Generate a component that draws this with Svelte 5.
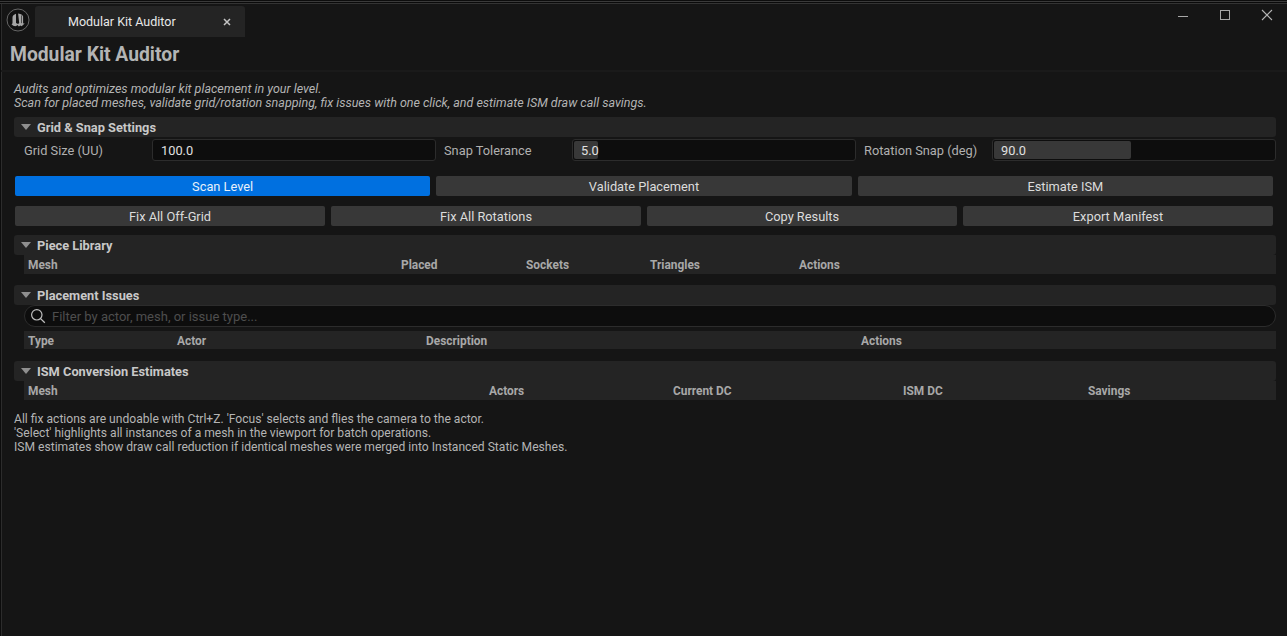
<script lang="ts">
  const grid = [
    { label: 'Grid Size (UU)', value: '100.0', fill: 0 },
    { label: 'Snap Tolerance', value: '5.0', fill: 8.5 },
    { label: 'Rotation Snap (deg)', value: '90.0', fill: 48.6 }
  ]
  const topButtons = ['Validate Placement', 'Estimate ISM']
  const bottomButtons = ['Fix All Off-Grid', 'Fix All Rotations', 'Copy Results', 'Export Manifest']
</script>

<div class="window">
  <header class="titlebar">
    <svg class="logo" viewBox="0 0 24 24" width="24" height="24" aria-hidden="true">
      <circle cx="12" cy="12" r="11" fill="#101010" stroke="#666" stroke-width="1" />
      <path
        d="M10 5.8C7.8 6.6 6.5 7.8 6.5 9.5v5.6c0 .6-.4 1-1 1.2 1.3 1.4 3.1 2.2 4.7 1.8l1.2-1.1 1.5 1.5 1.5-1 1.1.7c1.4-.7 2.5-1.9 3-3.2-.5.4-1 .5-1.4.4V8.6c0-1.3-1.6-2.6-5-3.2L13.2 15 12 16l-2-1z"
        fill="#a4a4a4"
      />
      <path d="M15.5 7.4v7.8" stroke="#101010" stroke-width="0.6" />
    </svg>
    <div class="tab">
      <span class="tab-label">Modular Kit Auditor</span>
      <svg class="tab-close" viewBox="0 0 8 8" width="8" height="8" aria-hidden="true">
        <path d="M1 1l6 6M7 1L1 7" stroke="#c4c4c4" stroke-width="1.5" />
      </svg>
    </div>
    <div class="winctl">
      <svg viewBox="0 0 12 12" width="12" height="12" aria-hidden="true"><path d="M1 7.5h10" stroke="#a8a8a8" /></svg>
      <svg viewBox="0 0 12 12" width="12" height="12" aria-hidden="true"><rect x="1.5" y="1.5" width="9" height="9" fill="none" stroke="#a8a8a8" /></svg>
      <svg viewBox="0 0 12 12" width="12" height="12" aria-hidden="true"><path d="M1 1l10 10M11 1L1 11" stroke="#b4b4b4" stroke-width="1.1" /></svg>
    </div>
  </header>

  <h1 class="heading">Modular Kit Auditor</h1>

  <main class="content">
    <p class="intro">
      Audits and optimizes modular kit placement in your level.<br />
      Scan for placed meshes, validate grid/rotation snapping, fix issues with one click, and estimate ISM draw call savings.
    </p>

    <div class="section-head"><span class="arrow"></span>Grid &amp; Snap Settings</div>
    <div class="settings">
      {#each grid as g}
        <div class="field">
          <span class="field-label">{g.label}</span>
          <div class="input">
            {#if g.fill}<span class="input-fill" style="width: {g.fill}%"></span>{/if}
            <span class="input-value">{g.value}</span>
          </div>
        </div>
      {/each}
    </div>

    <div class="btn-row three">
      <button class="btn primary">Scan Level</button>
      {#each topButtons as b}
        <button class="btn">{b}</button>
      {/each}
    </div>
    <div class="btn-row four">
      {#each bottomButtons as b}
        <button class="btn">{b}</button>
      {/each}
    </div>

    <div class="section-head first"><span class="arrow"></span>Piece Library</div>
    <div class="table-head pieces">
      <span>Mesh</span><span>Placed</span><span>Sockets</span><span>Triangles</span><span>Actions</span>
    </div>

    <div class="section-head tight"><span class="arrow"></span>Placement Issues</div>
    <div class="search">
      <svg viewBox="0 0 16 16" width="16" height="16" aria-hidden="true">
        <circle cx="6.8" cy="6.8" r="5.2" fill="none" stroke="#c0c0c0" stroke-width="1.2" />
        <path d="M10.6 10.6l4.2 4.2" stroke="#c0c0c0" stroke-width="1.3" />
      </svg>
      <span>Filter by actor, mesh, or issue type...</span>
    </div>
    <div class="table-head issues">
      <span>Type</span><span>Actor</span><span>Description</span><span>Actions</span>
    </div>

    <div class="section-head"><span class="arrow"></span>ISM Conversion Estimates</div>
    <div class="table-head ism">
      <span>Mesh</span><span>Actors</span><span>Current DC</span><span>ISM DC</span><span>Savings</span>
    </div>

    <p class="notes">
      All fix actions are undoable with Ctrl+Z. 'Focus' selects and flies the camera to the actor.<br />
      'Select' highlights all instances of a mesh in the viewport for batch operations.<br />
      ISM estimates show draw call reduction if identical meshes were merged into Instanced Static Meshes.
    </p>
  </main>
</div>

<style>
  :global(body) {
    margin: 0;
    background: #151515;
  }
  .window {
    height: 636px;
    box-sizing: border-box;
    padding-left: 1px;
    background:
      linear-gradient(to bottom, #0c0c0c 1px, #3a3a3a 1px, #3a3a3a 2px, #0a0a0a 2px, #0a0a0a 3px, #333 3px, #333 4px, transparent 4px),
      linear-gradient(to right, #0c0c0c 1px, #2c2c2c 1px, #2c2c2c 2px, #151515 2px);
    overflow: hidden;
    font-family: Roboto, "Liberation Sans", sans-serif;
    font-size: 12px;
    color: #c0c0c0;
  }
  .titlebar {
    height: 37px;
    display: flex;
    align-items: flex-start;
    box-sizing: border-box;
    padding: 6px 0 0 5px;
  }
  .logo {
    flex-shrink: 0;
    margin-top: 2px;
  }
  .tab {
    width: 210px;
    height: 31px;
    margin-left: 5px;
    background: #242424;
    border-radius: 3px 3px 0 0;
    display: flex;
    align-items: center;
    box-sizing: border-box;
    padding: 0 14px 0 33px;
    color: #e8e8e8;
    font-size: 12.5px;
  }
  .tab-label {
    flex: 1;
  }
  .winctl {
    margin-left: auto;
    display: flex;
    gap: 30px;
    padding: 3px 14px 0 0;
  }
  .heading {
    margin: 0;
    height: 33px;
    padding: 0 0 0 9px;
    line-height: 36px;
    font-size: 19.3px;
    font-weight: 700;
    color: #b4b4b4;
    border-bottom: 2px solid #1a1a1a;
    box-sizing: content-box;
  }
  .content {
    padding: 10px 11px 0 13px;
  }
  .intro {
    margin: 0 0 7px;
    font-style: italic;
    font-size: 12.5px;
    line-height: 14px;
    color: #b4b4b4;
  }
  .section-head {
    height: 20px;
    margin-top: 12px;
    background: #242424;
    border-radius: 3px;
    display: flex;
    align-items: center;
    font-weight: 700;
    font-size: 12.8px;
    color: #c8c8c8;
    padding-left: 7px;
  }
  .intro + .section-head {
    margin-top: 0;
  }
  .section-head.first {
    margin-top: 9px;
  }
  .section-head.tight {
    margin-top: 11px;
  }
  .arrow {
    width: 0;
    height: 0;
    border-left: 5px solid transparent;
    border-right: 5px solid transparent;
    border-top: 6px solid #8f8f8f;
    margin-right: 6px;
  }
  .settings {
    display: grid;
    grid-template-columns: repeat(3, 1fr);
    column-gap: 8px;
    margin-top: 2px;
    padding-left: 10px;
  }
  .field {
    display: grid;
    grid-template-columns: 128px 1fr;
    align-items: center;
  }
  .field-label {
    color: #b0b0b0;
    font-size: 12.8px;
  }
  .input {
    position: relative;
    height: 22px;
    box-sizing: border-box;
    background: #0d0d0d;
    border: 1px solid #2c2c2c;
    border-radius: 3px;
    display: flex;
    align-items: center;
    padding-left: 8px;
    color: #e0e0e0;
    font-size: 12.8px;
  }
  .input-fill {
    position: absolute;
    left: 1px;
    top: 1px;
    bottom: 1px;
    background: #383838;
    border-radius: 2px;
  }
  .input-value {
    position: relative;
  }
  .btn-row {
    display: grid;
    column-gap: 6px;
    margin-left: 1px;
    margin-right: 3px;
  }
  .btn-row.three {
    grid-template-columns: repeat(3, 1fr);
    margin-top: 15px;
  }
  .btn-row.four {
    grid-template-columns: repeat(4, 1fr);
    margin-top: 10px;
  }
  .btn {
    height: 20px;
    padding: 0;
    border: 0;
    border-radius: 2px;
    background: #383838;
    color: #dcdcdc;
    font-family: inherit;
    font-size: 12.8px;
  }
  .btn.primary {
    background: #0070e0;
    color: #e8f0fa;
  }
  .table-head {
    height: 18px;
    margin-left: 10px;
    background: #242424;
    display: grid;
    align-items: center;
    padding: 1px 0 0 4px;
    font-weight: 700;
    font-size: 11.9px;
    color: #a8a8a8;
  }
  .pieces {
    grid-template-columns: 373px 125px 124px 149px 1fr;
  }
  .issues {
    margin-top: 4px;
    height: 17px;
    grid-template-columns: 149px 249px 435px 1fr;
  }
  .ism {
    grid-template-columns: 461px 184px 230px 185px 1fr;
  }
  .search {
    height: 22px;
    margin: 0 0 0 10px;
    box-sizing: border-box;
    background: #0d0d0d;
    border: 1px solid #2c2c2c;
    border-radius: 11px;
    display: flex;
    align-items: center;
    gap: 6px;
    padding-left: 5px;
    color: #4e4e4e;
    font-size: 13px;
  }
  .notes {
    margin: 12px 0 0;
    font-size: 12.1px;
    line-height: 14px;
    color: #b4b4b4;
  }
</style>
